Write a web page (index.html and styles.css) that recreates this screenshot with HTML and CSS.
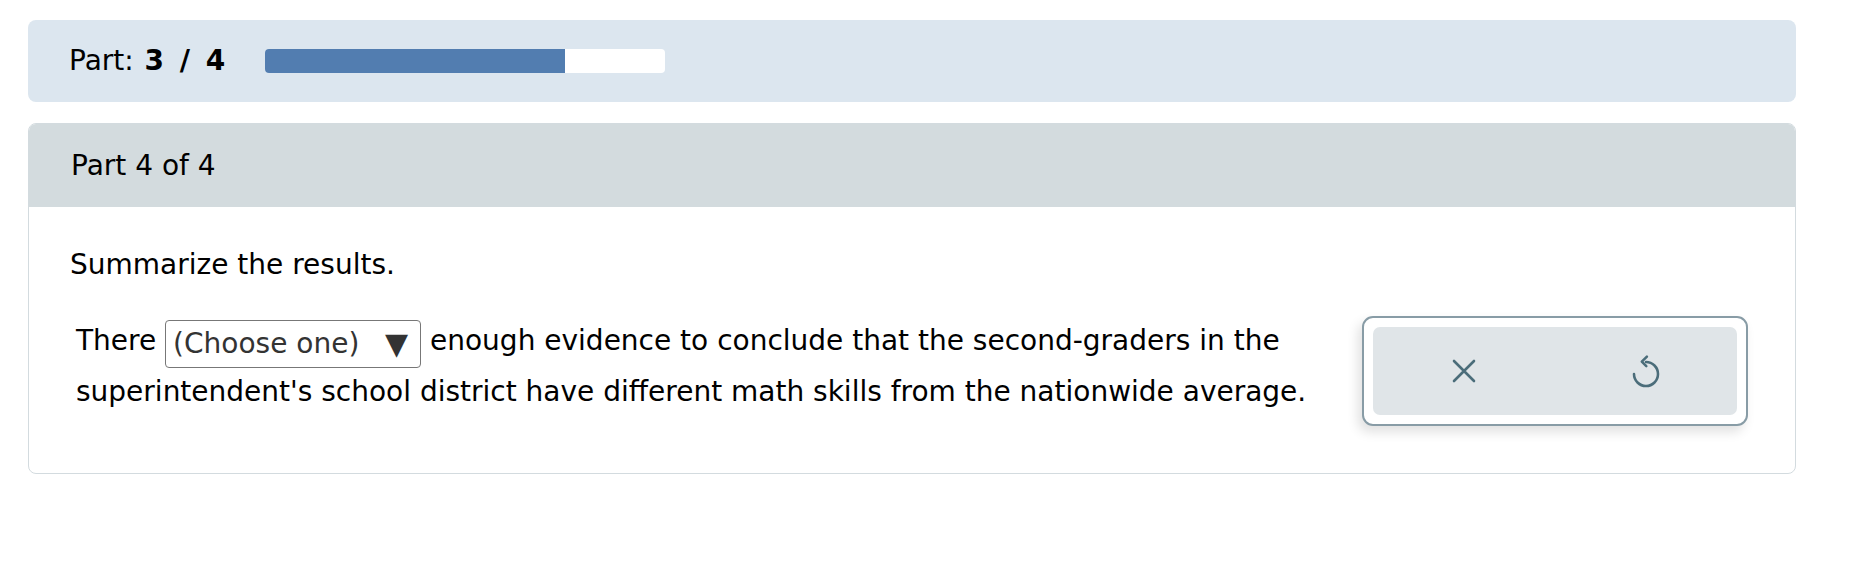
FILE: index.html
```html
<!DOCTYPE html>
<html lang="en">
<head>
<meta charset="utf-8">
<title>Part 4 of 4</title>
<link rel="stylesheet" href="styles.css">
</head>
<body>
<div class="page">
  <div class="progress-bar-wrap">
    <div class="part-label">Part: <b>3 / 4</b></div>
    <div class="progress"><div class="progress-fill" style="width: 75%"></div></div>
  </div>

  <div class="panel">
    <div class="panel-header">Part 4 of 4</div>
    <div class="panel-body">
      <p class="prompt">Summarize the results.</p>
      <div class="answer-row">
        <p class="sentence">There <span class="select"><span class="select-text">(Choose one)</span><span class="select-arrow">▼</span></span> enough evidence to conclude that the second-graders in the superintendent's school district have different math skills from the nationwide average.</p>
        <div class="tools">
          <div class="tools-inner">
            <button class="tool-btn" aria-label="Clear">
              <svg width="24" height="24" viewBox="0 0 24 24"><path d="M2 2 L22 22 M22 2 L2 22" fill="none" stroke="#4b6d7a" stroke-width="2.6" stroke-linecap="round"/></svg>
            </button>
            <button class="tool-btn" aria-label="Undo">
              <svg width="36" height="36" viewBox="0 0 24 24"><path d="M12 6 A8 8 0 1 1 4 14" fill="none" stroke="#4b6d7a" stroke-width="1.7" stroke-linecap="round"/><path d="M12.6 2.4 L9.2 5.8 L12.2 8.8" fill="none" stroke="#4b6d7a" stroke-width="1.7" stroke-linecap="round" stroke-linejoin="round"/></svg>
            </button>
          </div>
        </div>
      </div>
    </div>
  </div>
</div>
</body>
</html>
```
FILE: styles.css
```css
* { box-sizing: border-box; }
html, body { margin: 0; padding: 0; background: #fff; }
body {
  font-family: "DejaVu Sans", Verdana, sans-serif;
  font-size: 28px;
  color: #000;
}
.page {
  padding: 20px 60px 0 28px;
}
.progress-bar-wrap {
  background: #dce6ef;
  border-radius: 8px;
  height: 82px;
  display: flex;
  align-items: center;
  padding-left: 41px;
  gap: 39px;
}
.part-label { line-height: 1; }
.part-label b {
  font-weight: bold;
  margin-left: 2px;
  letter-spacing: 1px;
  word-spacing: 4px;
}
.progress {
  width: 400px;
  height: 24px;
  background: #fff;
  border-radius: 4px;
  overflow: hidden;
}
.progress-fill {
  height: 100%;
  background: #527db0;
}
.panel {
  margin-top: 21px;
  border: 1px solid #d3dbdf;
  border-radius: 8px;
  overflow: hidden;
}
.panel-header {
  background: #d3dbde;
  height: 83px;
  display: flex;
  align-items: center;
  padding-left: 42px;
}
.panel-body {
  padding: 37px 47px 47px 41px;
}
.prompt {
  margin: 0;
  line-height: 42px;
}
.answer-row {
  margin-top: 31px;
  display: flex;
  align-items: flex-start;
  gap: 30px;
}
.sentence {
  flex: 1;
  margin: 0;
  padding-left: 6px;
  line-height: 48px;
}
.select {
  display: inline-flex;
  align-items: flex-start;
  justify-content: space-between;
  height: 48px;
  width: 256px;
  border: 1.5px solid #777;
  border-radius: 4px;
  padding: 3px 12px 0 7px;
  color: #333;
  vertical-align: -3px;
  line-height: 40px;
}
.select-text { display: block; }
.select-arrow { display: block; font-size: 30px; color: #333; }
.tools {
  width: 386px;
  height: 110px;
  margin-top: -1px;
  border: 2px solid #889ca6;
  border-radius: 11px;
  padding: 9px;
  background: #fff;
  box-shadow: -4px 6px 12px rgba(0, 0, 0, 0.12);
  flex: none;
}
.tools-inner {
  height: 100%;
  background: #e0e5e8;
  border-radius: 7px;
  display: flex;
}
.tool-btn {
  flex: 1;
  border: none;
  background: transparent;
  padding: 0;
  display: flex;
  align-items: center;
  justify-content: center;
}
.tool-btn svg { display: block; }
```
